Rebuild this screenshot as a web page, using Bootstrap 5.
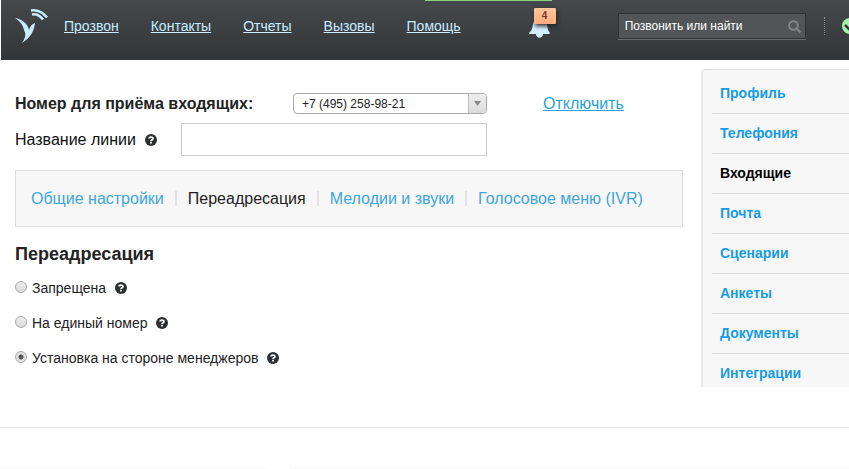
<!DOCTYPE html>
<html lang="ru">
<head>
<meta charset="utf-8">
<meta name="viewport" content="width=device-width, initial-scale=1">
<title>Переадресация</title>
<link href="https://cdn.jsdelivr.net/npm/bootstrap@5.3.0/dist/css/bootstrap.min.css" rel="stylesheet">
<style>
body{font-family:"Liberation Sans",Arial,sans-serif;font-size:14px;line-height:20px;color:#222;background:#fff;overflow-x:hidden}
.topbar{height:60px;margin-left:1px;background:linear-gradient(#45494c,#333638);overflow:hidden;position:relative}
.topbar .brand{width:34px;margin-left:14px;margin-right:15px}
.menu{gap:32px;font-size:14px;padding-bottom:8px}
.menu a{color:#c9ebff}
.notice{position:absolute;left:424px;top:0;width:127px;height:1px;background:#8fcf80}
.bell{width:30px;height:32px;margin-left:68px;margin-bottom:12px}
.count{left:5px;top:0;width:22px;height:16px;line-height:15px;font-size:10px;border-radius:1px;background:linear-gradient(#ffc79a,#ffac80);color:#7b3a22;box-shadow:1px 2px 4px #222}
.finder{width:188px;height:26px;margin-left:59px;margin-bottom:8px;background:#515558;border:1px solid #2f3234;box-shadow:0 1px #686c6e}
.finder input{font-size:12px;color:#fff;padding:0 0 0 6px;min-width:0}
.finder input::placeholder{color:#fff;opacity:1}
.dots{height:18px;margin:0 17px 8px 18px;border-left:1px dotted #85898b}
.page-body{padding-left:15px}
.settings{padding-top:33px;margin-right:18px;min-width:0}
.lbl{font-size:16px;color:#111}
.lbl-main{font-size:16px;font-weight:700;color:#222;width:278px}
.lbl-line{width:166px}
.line-row{margin-top:9px}
.phone{width:194px;height:21px;margin-right:56px}
.phone select{appearance:none;border:1px solid #aaa;border-radius:4px;font-size:12px;color:#222;background:#fff;padding:0 8px}
.phone .arrow{right:1px;top:1px;bottom:1px;width:18px;border-left:1px solid #bbb;background:linear-gradient(#eee,#dcdcdc);border-radius:0 3px 3px 0;pointer-events:none}
.off{font-size:16px;color:#2b9fd6}
.line-name{width:306px;height:33px;border:1px solid #ccc}
.tabs{margin-top:14px;height:57px;padding:0 15px;background:#f7f7f7;border:1px solid #ddd;font-size:16px}
.tabs a{color:#3ea6dc;text-decoration:none}
.tabs a.current{color:#222}
.tabs a+a::before{content:"";display:inline-block;width:2px;height:15px;margin:0 11px;background:#e3e3e6;vertical-align:-2px}
h2{font-size:18px;line-height:24px;font-weight:700;margin:15px 0 12px}
.choice{height:20px;margin-bottom:15px}
.choice input{appearance:none;width:12px;height:12px;margin:0 5px 3px 0;border:1px solid #aaa;border-radius:50%;background:linear-gradient(#eee,#d9d9d9)}
.choice input:checked{background:radial-gradient(circle,#555 0 2px,#e2e2e2 3px)}
.help{width:12px;height:12px;margin-left:9px;flex:none}
.sections{width:148px;margin-top:9px;height:318px;overflow:hidden;background:#f7f7f7;border:solid #ddd;border-width:1px 0 0 2px;border-left-color:#ebebeb;border-radius:4px 0 0 0;padding-left:9px}
.sections a{display:block;height:40px;line-height:20px;padding:9px 0 0 8px;border-top:1px solid #ddd;color:#179be3;font-weight:700;text-decoration:none}
.sections a:first-child{margin-top:3px;border-top:0;padding-top:10px}
.sections a.current{color:#000}
.rule-line{margin-top:40px;border-top:1px solid #e5e5e5;height:41px}
.foot span{height:1px;background:#f7f7f7}
.foot .foot-a{width:266px}
</style>
<script src="https://cdn.jsdelivr.net/npm/bootstrap@5.3.0/dist/js/bootstrap.bundle.min.js"></script>
</head>
<body>
<svg class="d-none"><symbol id="q" viewBox="0 0 12 12"><circle cx="6" cy="6" r="6" fill="#2d3033"/><path d="M4 4.6C4 2.6 8 2.5 8 4.5 8 5.8 6 5.7 6 7.2" fill="none" stroke="#fff" stroke-width="1.7"/><path d="M5.1 8h1.8v1.6H5.1z" fill="#fff"/></symbol></svg>
<header class="topbar d-flex align-items-center">
<span class="notice"></span>
<a class="brand flex-shrink-0" href="#" aria-label="Главная"><svg class="d-block" width="34" height="44" viewBox="0 0 34 44"><path d="M0 10C7 11 13 16 14 22c1-4 3-6 6-7-1 9-5 15-13 20 4-6 4-9 2-13C8 17 5 13 0 10z" fill="#c9ebff"/><path d="M16 2.500c7-1 12 2 16 7M17 6.500c5-1 8 1 11 5" fill="none" stroke="#c9ebff" stroke-width="2.6"/></svg></a>
<nav class="menu d-flex"><a href="#">Прозвон</a><a href="#">Контакты</a><a href="#">Отчеты</a><a href="#">Вызовы</a><a href="#">Помощь</a></nav>
<button class="bell btn p-0 border-0 position-relative flex-shrink-0" aria-label="Уведомления"><svg class="d-block" width="30" height="32" viewBox="0 0 30 32"><path d="M0 25c4-3 3-7 5-12 1-3 3-5 6-5s5 2 6 5c2 5 1 9 4 12l-1 1h-6c0 5-7 5-7 0H0z" fill="#d3f0ff"/></svg><span class="count position-absolute fw-bold">4</span></button>
<form class="finder d-flex align-items-center flex-shrink-0"><input class="border-0 bg-transparent flex-grow-1" aria-label="Поиск" placeholder="Позвонить или найти"><svg class="me-1" width="13" height="13" viewBox="0 0 13 13" fill="none" stroke="#858585" stroke-width="2"><circle cx="5.5" cy="5.5" r="4.3"/><path d="M8.5 8.5l4 4"/></svg></form>
<span class="dots flex-shrink-0"></span>
<svg class="flex-shrink-0 mb-2" width="16" height="16" viewBox="0 0 16 16"><circle cx="8" cy="8" r="8" fill="#a5f0ac"/><path d="M3 7l4 4 6-6" fill="none" stroke="#34383a" stroke-width="2.5"/></svg>
</header>
<div class="page-body d-flex">
<main class="settings flex-grow-1">
<div class="d-flex align-items-center"><label class="lbl-main" for="phone">Номер для приёма входящих:</label><div class="phone position-relative"><select class="w-100 h-100 d-block" id="phone"><option>+7 (495) 258-98-21</option></select><span class="arrow position-absolute d-flex align-items-center justify-content-center"><svg width="7" height="5"><path d="M0 0h7L3.500 5z" fill="#888"/></svg></span></div><a class="off" href="#">Отключить</a></div>
<div class="line-row d-flex align-items-center"><div class="lbl-line d-flex align-items-center"><label class="lbl" for="line">Название линии</label><svg class="help"><use href="#q"/></svg></div><input class="line-name" id="line" type="text"></div>
<nav class="tabs d-flex align-items-center"><a href="#">Общие настройки</a><a class="current" href="#">Переадресация</a><a href="#">Мелодии и звуки</a><a href="#">Голосовое меню (IVR)</a></nav>
<h2>Переадресация</h2>
<div class="choice d-flex align-items-center"><input type="radio" name="fwd" id="f1"><label for="f1">Запрещена</label><svg class="help"><use href="#q"/></svg></div>
<div class="choice d-flex align-items-center"><input type="radio" name="fwd" id="f2"><label for="f2">На единый номер</label><svg class="help"><use href="#q"/></svg></div>
<div class="choice d-flex align-items-center"><input type="radio" name="fwd" id="f3" checked><label for="f3">Установка на стороне менеджеров</label><svg class="help"><use href="#q"/></svg></div>
</main>
<nav class="sections flex-shrink-0"><a href="#">Профиль</a><a href="#">Телефония</a><a class="current" href="#">Входящие</a><a href="#">Почта</a><a href="#">Сценарии</a><a href="#">Анкеты</a><a href="#">Документы</a><a href="#">Интеграции</a></nav>
</div>
<div class="rule-line"></div>
<div class="foot d-flex gap-4"><span class="foot-a"></span><span class="flex-grow-1"></span></div>
</body>
</html>
